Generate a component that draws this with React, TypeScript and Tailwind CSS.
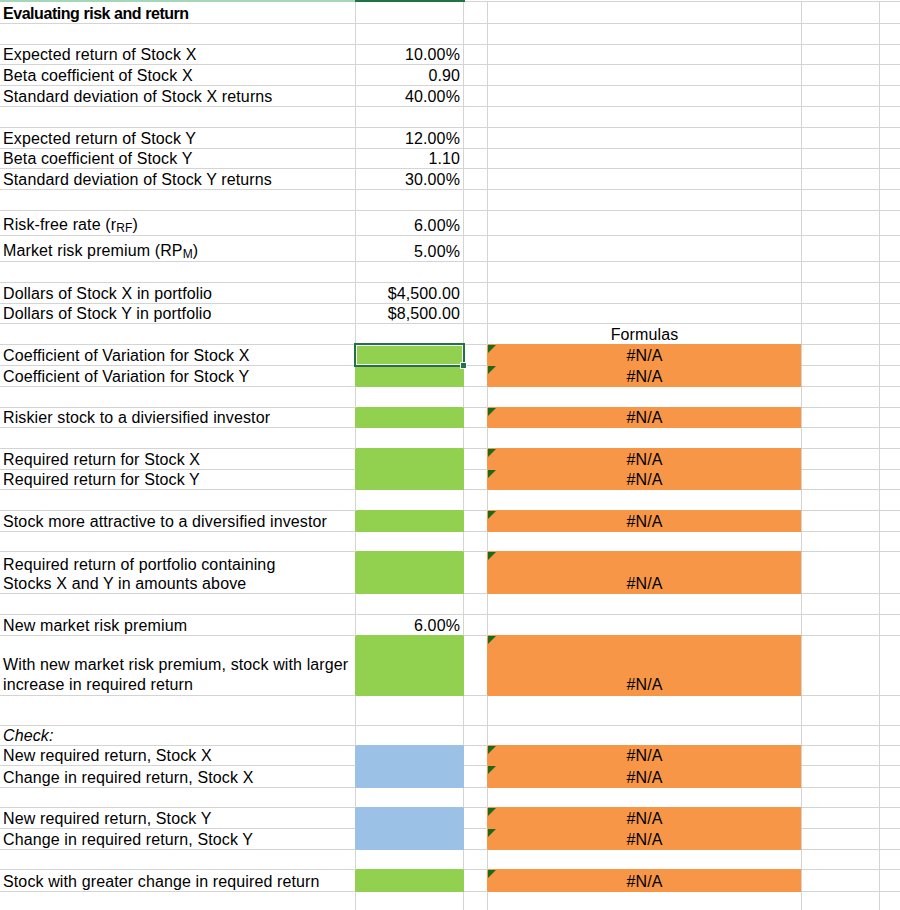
import type { ReactNode } from "react";

type Fill = "g" | "o" | "b" | "";

const BG: Record<Fill, string> = {
  g: "bg-[#92d050]",
  o: "bg-[#f79646]",
  b: "bg-[#9bc2e6]",
  "": "bg-white",
};
const BB: Record<Fill, string> = {
  g: "border-b-[#92d050]",
  o: "border-b-[#f79646]",
  b: "border-b-[#9bc2e6]",
  "": "border-b-[#d4d4d4]",
};
const BR: Record<Fill, string> = {
  g: "border-r-[#92d050]",
  o: "border-r-[#f79646]",
  b: "border-r-[#9bc2e6]",
  "": "border-r-[#d4d4d4]",
};

type Row = {
  h: string;
  a?: ReactNode;
  b?: string;
  d?: string;
  fb?: Fill;
  fd?: Fill;
  lead?: string;
  sel?: boolean;
};

const Sub = ({ children }: { children: ReactNode }) => (
  <span className="relative top-[2px] text-[12px]">{children}</span>
);

const rows: Row[] = [
  {
    h: "h-[22px]",
    a: <span className="text-[16px] font-bold tracking-[-0.45px]">Evaluating risk and return</span>,
  },
  { h: "h-[21px]" },
  { h: "h-[20px]", a: "Expected return of Stock X", b: "10.00%" },
  { h: "h-[21px]", a: "Beta coefficient of Stock X", b: "0.90" },
  { h: "h-[21px]", a: "Standard deviation of Stock X returns", b: "40.00%" },
  { h: "h-[21px]" },
  { h: "h-[21px]", a: "Expected return of Stock Y", b: "12.00%" },
  { h: "h-[20px]", a: "Beta coefficient of Stock Y", b: "1.10" },
  { h: "h-[21px]", a: "Standard deviation of Stock Y returns", b: "30.00%" },
  { h: "h-[21px]" },
  {
    h: "h-[25px]",
    a: (
      <>
        Risk-free rate (r<Sub>RF</Sub>)
      </>
    ),
    b: "6.00%",
  },
  {
    h: "h-[26px]",
    a: (
      <>
        Market risk premium (RP<Sub>M</Sub>)
      </>
    ),
    b: "5.00%",
  },
  { h: "h-[21px]" },
  { h: "h-[21px]", a: "Dollars of Stock X in portfolio", b: "$4,500.00" },
  { h: "h-[20px]", a: "Dollars of Stock Y in portfolio", b: "$8,500.00" },
  { h: "h-[21px]", d: "Formulas" },
  { h: "h-[21px]", a: "Coefficient of Variation for Stock X", fb: "g", fd: "o", d: "#N/A", sel: true },
  { h: "h-[21px]", a: "Coefficient of Variation for Stock Y", fb: "g", fd: "o", d: "#N/A" },
  { h: "h-[21px]" },
  { h: "h-[20px]", a: "Riskier stock to a diviersified investor", fb: "g", fd: "o", d: "#N/A" },
  { h: "h-[21px]" },
  { h: "h-[21px]", a: "Required return for Stock X", fb: "g", fd: "o", d: "#N/A" },
  { h: "h-[20px]", a: "Required return for Stock Y", fb: "g", fd: "o", d: "#N/A" },
  { h: "h-[21px]" },
  { h: "h-[21px]", a: "Stock more attractive to a diversified investor", fb: "g", fd: "o", d: "#N/A" },
  { h: "h-[20px]" },
  {
    h: "h-[42px]",
    lead: "leading-[19px]",
    a: (
      <>
        Required return of portfolio containing
        <br />
        Stocks X and Y in amounts above
      </>
    ),
    fb: "g",
    fd: "o",
    d: "#N/A",
  },
  { h: "h-[21px]" },
  { h: "h-[21px]", a: "New market risk premium", b: "6.00%" },
  {
    h: "h-[60px]",
    lead: "leading-[20px]",
    a: (
      <>
        With new market risk premium, stock with larger
        <br />
        increase in required return
      </>
    ),
    fb: "g",
    fd: "o",
    d: "#N/A",
  },
  { h: "h-[30px]" },
  { h: "h-[20px]", a: <span className="italic">Check:</span> },
  { h: "h-[20px]", a: "New required return, Stock X", fb: "b", fd: "o", d: "#N/A" },
  { h: "h-[22px]", a: "Change in required return, Stock X", fb: "b", fd: "o", d: "#N/A" },
  { h: "h-[20px]" },
  { h: "h-[21px]", a: "New required return, Stock Y", fb: "b", fd: "o", d: "#N/A" },
  { h: "h-[21px]", a: "Change in required return, Stock Y", fb: "b", fd: "o", d: "#N/A" },
  { h: "h-[20px]" },
  { h: "h-[22px]", a: "Stock with greater change in required return", fb: "g", fd: "o", d: "#N/A" },
  { h: "h-[19px]" },
];

function SheetRow({ row, next }: { row: Row; next?: Row }) {
  const fb = row.fb ?? "";
  const fd = row.fd ?? "";
  const fbBelow = next?.fb ?? "";
  const fdBelow = next?.fd ?? "";
  const lead = row.lead ?? "leading-[18px]";
  const cell = "flex shrink-0 items-end border-r border-b";

  return (
    <div className={`flex ${row.h}`}>
      <div className={`${cell} w-[356px] pl-[3px] whitespace-nowrap ${lead} ${BR[fb]} border-b-[#d4d4d4]`}>
        <div>{row.a}</div>
      </div>
      <div className={`${cell} relative w-[108px] justify-end pr-[3px] ${lead} ${BG[fb]} ${BR[fb]} ${BB[fb || fbBelow]}`}>
        {row.b}
        {row.sel && (
          <>
            <div className="pointer-events-none absolute -left-[2px] -top-[2px] z-10 h-[24px] w-[111px] border-2 border-[#217346] shadow-[inset_0_0_0_1px_white]" />
            <div className="absolute left-[104px] top-[17px] z-20 h-[7px] w-[7px] border border-white bg-[#217346]" />
          </>
        )}
      </div>
      <div className={`${cell} w-[24px] ${BR[fd]} border-b-[#d4d4d4]`} />
      <div className={`${cell} relative w-[314px] justify-center ${lead} ${BG[fd]} border-r-[#d4d4d4] ${BB[fd || fdBelow]}`}>
        {row.fd && (
          <div className="absolute left-0 top-0 h-[8px] w-[8px] bg-[#1d6b1a] [clip-path:polygon(0_0,100%_0,0_100%)]" />
        )}
        {row.d}
      </div>
      <div className={`${cell} w-[78px] border-r-[#d4d4d4] border-b-[#d4d4d4]`} />
      <div className="flex-1 border-b border-b-[#d4d4d4]" />
    </div>
  );
}

export default function App() {
  return (
    <div className="h-[910px] w-[900px] overflow-hidden bg-white font-['Liberation_Sans',Arial,sans-serif] text-[16px] tracking-[0.12px] text-black">
      <div className="flex h-[2px]">
        <div className="w-[355px] bg-[#a3d7b8]" />
        <div className="w-[110px] bg-[#217346]" />
        <div className="flex-1 border-b border-b-[#d4d4d4]" />
      </div>
      {rows.map((row, i) => (
        <SheetRow key={i} row={row} next={rows[i + 1]} />
      ))}
    </div>
  );
}
